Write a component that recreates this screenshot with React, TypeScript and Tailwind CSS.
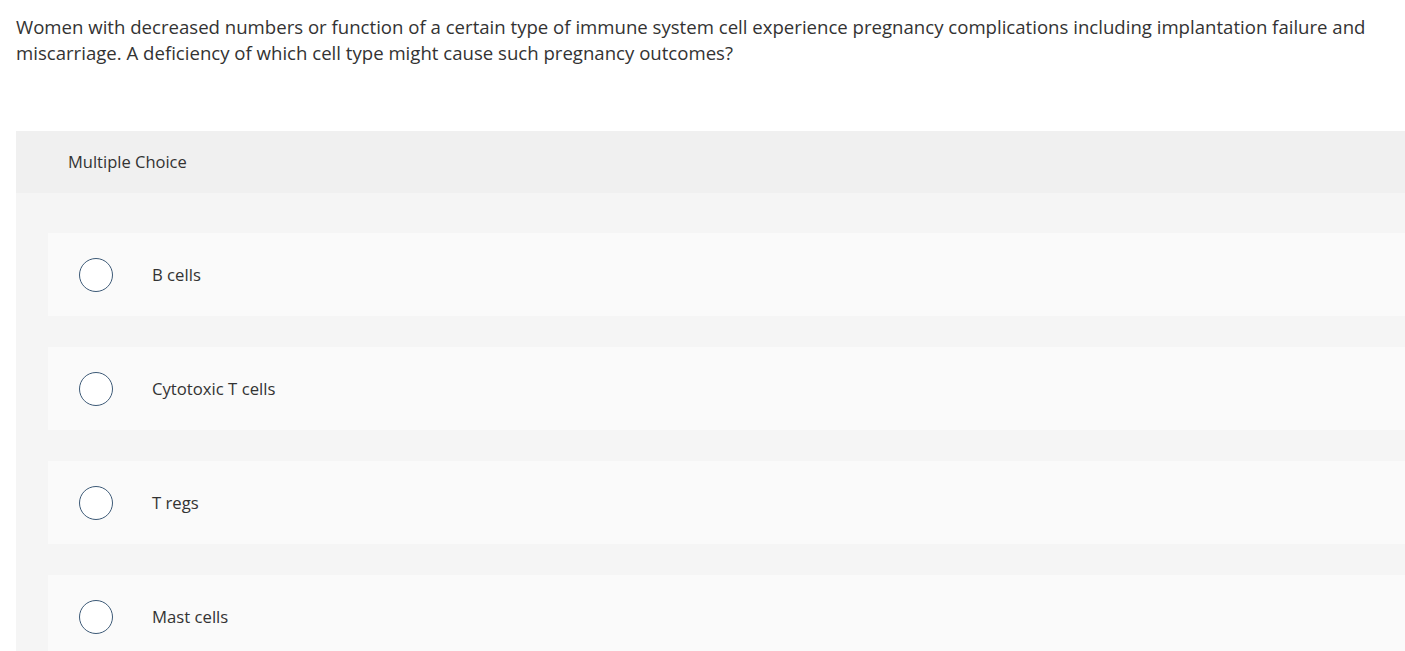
import React from 'react';

const options = ['B cells', 'Cytotoxic T cells', 'T regs', 'Mast cells'];

export default function App() {
  return (
    <div className="h-screen bg-white text-[#333] overflow-hidden" style={{ fontFamily: '"Open Sans", Arial, sans-serif' }}>
      <p className="px-4 pt-[14px] text-[18.6px] leading-[26px] text-[#333]">
        Women with decreased numbers or function of a certain type of immune system cell experience pregnancy complications including implantation failure and miscarriage. A deficiency of which cell type might cause such pregnancy outcomes?
      </p>

      <div className="ml-4 mt-[65px] bg-[#f5f5f5] pb-10">
        <div className="h-[62px] bg-[#f0f0f0] flex items-center pl-[52px] text-[16.5px] text-[#333]">
          Multiple Choice
        </div>
        <div className="pl-8 pt-10 flex flex-col gap-[31px]">
          {options.map(opt => (
            <label key={opt} className="h-[83px] bg-[#fafafa] flex items-center">
              <span className="ml-[31px] w-[34px] h-[34px] rounded-full border-[1.5px] border-[#3d5a77] bg-white shrink-0" />
              <span className="ml-[39px] text-[16.7px] text-[#333]">{opt}</span>
            </label>
          ))}
        </div>
      </div>
    </div>
  );
}
